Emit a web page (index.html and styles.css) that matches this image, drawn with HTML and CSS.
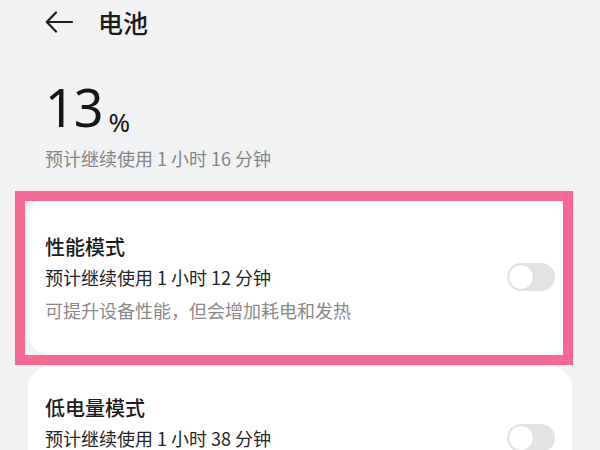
FILE: index.html
```html
<!DOCTYPE html>
<html lang="zh-CN">
<head>
<meta charset="utf-8">
<title>电池</title>
<link rel="stylesheet" href="styles.css">
</head>
<body>
<div class="page">
  <header class="topbar">
    <svg class="back" width="28" height="22" viewBox="0 0 28 22" aria-hidden="true">
      <path d="M27 11H2M11 1.5L1.8 11l9.2 9.5" fill="none" stroke="#1f1f1f" stroke-width="2.2" stroke-linecap="round" stroke-linejoin="round"/>
    </svg>
    <h1 class="title">电池</h1>
  </header>

  <div class="level">13<span class="pct">%</span></div>
  <p class="estimate">预计继续使用 1 小时 16 分钟</p>

  <section class="card card-first highlighted">
    <div class="card-text">
      <div class="card-title">性能模式</div>
      <div class="card-line">预计继续使用 1 小时 12 分钟</div>
      <div class="card-desc">可提升设备性能，但会增加耗电和发热</div>
    </div>
    <span class="toggle"><span class="knob"></span></span>
  </section>

  <section class="card">
    <div class="card-text">
      <div class="card-title">低电量模式</div>
      <div class="card-line">预计继续使用 1 小时 38 分钟</div>
      <div class="card-desc">降低功耗，延长续航时间</div>
    </div>
    <span class="toggle"><span class="knob"></span></span>
  </section>
</div>
</body>
</html>
```

FILE: styles.css
```css
* { box-sizing: border-box; }
html, body {
  margin: 0;
  padding: 0;
  background: #f1f2f4;
  font-family: "Noto Sans", "Noto Sans CJK SC", sans-serif;
  color: #1c1c1c;
}
.page {
  width: 600px;
  height: 450px;
  overflow: hidden;
}
.topbar {
  display: flex;
  align-items: center;
  height: 44px;
  padding-left: 45px;
  gap: 25px;
}
.back { display: block; }
.title {
  margin: 0;
  font-size: 25px;
  font-weight: 500;
  line-height: 44px;
  font-family: "Noto Sans CJK SC", sans-serif;
  color: #1c1c1c;
}
.level {
  margin-top: 37px;
  padding-left: 45px;
  font-size: 52px;
  line-height: 52px;
  height: 52px;
  font-weight: 400;
  color: #161616;
  letter-spacing: -1px;
}
.pct {
  font-size: 26px;
  margin-left: 6px;
  vertical-align: -5px;
  letter-spacing: 0;
}
.estimate {
  margin: 13px 0 0;
  padding-left: 45px;
  font-family: "Noto Sans CJK SC", sans-serif;
  font-size: 18px;
  line-height: 24px;
  color: #868686;
}
.card {
  position: relative;
  display: flex;
  align-items: center;
  justify-content: space-between;
  margin: 0 28px;
  padding: 28px 17px 28px 17px;
  background: #ffffff;
  border-radius: 22px;
  font-family: "Noto Sans CJK SC", sans-serif;
}
.card-first {
  margin-top: 26px;
  margin-bottom: 11px;
  padding-top: 37px;
}
.highlighted::after {
  content: "";
  position: absolute;
  left: -13px;
  right: -1px;
  top: -5px;
  bottom: -10px;
  border: 10px solid #f86890;
  pointer-events: none;
}
.card-title {
  font-size: 20px;
  line-height: 28px;
  font-weight: 500;
  color: #1c1c1c;
}
.card-line {
  font-size: 18px;
  line-height: 33px;
  color: #262626;
}
.card-desc {
  font-size: 18px;
  line-height: 33px;
  color: #8a8a8a;
}
.toggle {
  position: relative;
  flex: none;
  width: 48px;
  height: 28px;
  border-radius: 14px;
  background: #e3e3e3;
  margin-top: -6px;
}
.knob {
  position: absolute;
  left: 1px;
  top: 1px;
  width: 26px;
  height: 26px;
  border-radius: 50%;
  background: #ffffff;
  border: 1px solid #dcdcdc;
}
```
